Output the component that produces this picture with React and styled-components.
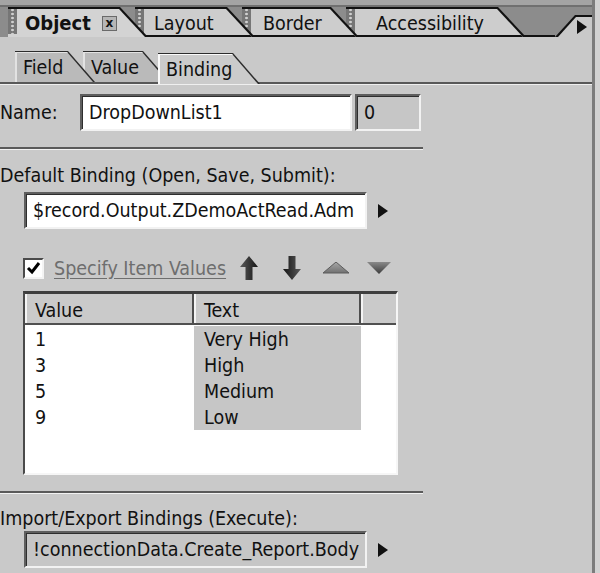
import React from 'react'
import styled, { createGlobalStyle } from 'styled-components'

const GlobalStyle = createGlobalStyle`
  html, body {
    margin: 0;
    padding: 0;
    background: #c9c9c9;
  }
  body {
    font-family: "DejaVu Sans Condensed", "DejaVu Sans", sans-serif;
    font-size: 19.5px;
    color: #111;
  }
`

const rows = [
  { value: '1', text: 'Very High' },
  { value: '3', text: 'High' },
  { value: '5', text: 'Medium' },
  { value: '9', text: 'Low' },
]

function UpArrow({ down }) {
  const id = down ? 'ga2' : 'ga1'
  return (
    <svg width="18" height="24" viewBox="0 0 18 24" style={down ? { transform: 'rotate(180deg)' } : null}>
      <defs>
        <linearGradient id={id} x1="0" x2="1" y1="0" y2="0">
          <stop offset="0" stopColor="#5a5a5a" />
          <stop offset="1" stopColor="#141414" />
        </linearGradient>
      </defs>
      <path d="M9 0 L18 11 L12.5 11 L12.5 24 L5.5 24 L5.5 11 L0 11 Z" fill={`url(#${id})`} />
    </svg>
  )
}

function TriUp() {
  return (
    <svg width="26" height="12" viewBox="0 0 26 12">
      <defs>
        <linearGradient id="gtu" x1="0" x2="0" y1="0" y2="1">
          <stop offset="0" stopColor="#a8a8a8" />
          <stop offset="1" stopColor="#707070" />
        </linearGradient>
      </defs>
      <polygon points="0,11 13,0 26,11" fill="url(#gtu)" stroke="#5c5c5c" strokeWidth="1" />
    </svg>
  )
}

function TriDown() {
  return (
    <svg width="24" height="14" viewBox="0 0 24 14">
      <defs>
        <linearGradient id="gtd" x1="0" x2="0" y1="0" y2="1">
          <stop offset="0" stopColor="#8a8a8a" />
          <stop offset="1" stopColor="#3c3c3c" />
        </linearGradient>
      </defs>
      <polygon points="0,1 24,1 12,13" fill="url(#gtd)" />
    </svg>
  )
}

function App() {
  return (
    <>
      <GlobalStyle />
      <Frame>
        <Panel>
          <TabStrip>
            <Tab $w={140} $z={5} $first>
              <TabFace $active>
                <Grip />
                <TabLabel $active>Object</TabLabel>
                <CloseBox>x</CloseBox>
              </TabFace>
            </Tab>
            <Tab $w={120} $z={4}>
              <TabFace>
                <Grip />
                <TabLabel $pad={10}>Layout</TabLabel>
              </TabFace>
            </Tab>
            <Tab $w={117} $z={3}>
              <TabFace>
                <Grip />
                <TabLabel $pad={12}>Border</TabLabel>
              </TabFace>
            </Tab>
            <Tab $w={180} $z={2}>
              <TabFace>
                <Grip />
                <TabLabel $pad={21}>Accessibility</TabLabel>
              </TabFace>
            </Tab>
            <StripFill />
            <Cap>
              <RightArrow $small />
            </Cap>
          </TabStrip>

          <SubTabRow>
            <SubTab $w={80} $z={3} $first>
              <SubFace>Field</SubFace>
            </SubTab>
            <SubTab $w={87} $z={2}>
              <SubFace>Value</SubFace>
            </SubTab>
            <SubTab $w={102} $z={4} $active>
              <SubFace $active>Binding</SubFace>
            </SubTab>
          </SubTabRow>

          <Content>
            <NameRow>
              <NameLabel>Name:</NameLabel>
              <Field $w={272}>DropDownList1</Field>
              <Field $w={66} $ml={3} $gray>0</Field>
            </NameRow>

            <Separator $mt={16} />

            <Label $mt={16}>Default Binding (Open, Save, Submit):</Label>
            <BindRow $mt={5}>
              <Field $w={343}>$record.Output.ZDemoActRead.Adm</Field>
              <RightArrow />
            </BindRow>

            <CheckRow>
              <CheckBox>
                <svg width="15" height="15" viewBox="0 0 15 15">
                  <path d="M2 7 L6 11 L13 2" fill="none" stroke="#000" strokeWidth="3" />
                </svg>
              </CheckBox>
              <CheckLabel>Specify Item Values</CheckLabel>
              <IconSlot $ml={14}><UpArrow /></IconSlot>
              <IconSlot $ml={25}><UpArrow down /></IconSlot>
              <IconSlot $ml={22}><TriUp /></IconSlot>
              <IconSlot $ml={18}><TriDown /></IconSlot>
            </CheckRow>

            <Table>
              <HeadRow>
                <HeadCell>Value</HeadCell>
                <HeadCell>Text</HeadCell>
                <HeadCell />
              </HeadRow>
              <Body>
                {rows.map(r => (
                  <BodyRow key={r.value}>
                    <ValueCell>{r.value}</ValueCell>
                    <TextCell>{r.text}</TextCell>
                    <span />
                  </BodyRow>
                ))}
              </Body>
            </Table>

            <Separator $mt={16} />

            <Label $mt={15}>Import/Export Bindings (Execute):</Label>
            <BindRow $mt={1}>
              <Field $w={343} $gray>!connectionData.Create_Report.Body</Field>
              <RightArrow />
            </BindRow>
          </Content>
        </Panel>
        <RightEdge />
      </Frame>
    </>
  )
}

const Frame = styled.div`
  display: flex;
  width: 600px;
  height: 573px;
  overflow: hidden;
`

const Panel = styled.div`
  width: 592px;
  display: flex;
  flex-direction: column;
  background: #c9c9c9;
`

const RightEdge = styled.div`
  width: 8px;
  box-sizing: border-box;
  border-left: 3px solid #7c7c7c;
  background: #d2d2d2;
`

const TabStrip = styled.div`
  display: flex;
  align-items: flex-end;
  box-sizing: border-box;
  height: 37px;
  padding-left: 8px;
  background: linear-gradient(#a4a4a4 0 5px, #707070 5px 7px, #8c8c8c 7px);
`

const Tab = styled.div`
  position: relative;
  z-index: ${p => p.$z};
  flex-shrink: 0;
  box-sizing: border-box;
  width: ${p => p.$w}px;
  height: 30px;
  margin-left: ${p => (p.$first ? 0 : -13)}px;
  padding-top: 2px;
  background: #111;
  clip-path: polygon(0 0, calc(100% - 28px) 0, 100% 100%, 0 100%);
`

const TabFace = styled.div`
  display: flex;
  align-items: center;
  height: 100%;
  background: ${p => (p.$active ? '#d3d3d3' : '#cdcdcd')};
  clip-path: polygon(0 0, calc(100% - 29px) 0, calc(100% - 3px) 100%, 0 100%);
  box-shadow: ${p => (p.$active ? 'none' : 'inset 0 -2px 0 #111')};
`

const Grip = styled.span`
  align-self: stretch;
  width: 9px;
  margin-bottom: 3px;
  background: radial-gradient(circle, #d0d0d0 1px, transparent 1.6px) center 3px / 9px 4px repeat-y, #767676;
`

const TabLabel = styled.span`
  margin-left: ${p => p.$pad || 8}px;
  font-size: ${p => (p.$active ? 20 : 19.5)}px;
  font-weight: ${p => (p.$active ? 700 : 400)};
  color: #111;
  white-space: nowrap;
`

const CloseBox = styled.span`
  display: flex;
  align-items: center;
  justify-content: center;
  width: 13px;
  height: 13px;
  margin-left: 11px;
  border: 1px solid #6a6a6a;
  background: #b6b6b6;
  font-family: "DejaVu Sans", sans-serif;
  font-size: 12px;
  font-weight: 700;
  line-height: 1;
`

const StripFill = styled.div`
  flex: 1;
  height: 30px;
  margin-left: -28px;
  box-sizing: border-box;
  border-bottom: 2px solid #111;
`

const Cap = styled.div`
  position: relative;
  display: flex;
  align-items: flex-end;
  justify-content: flex-end;
  box-sizing: border-box;
  width: 37px;
  height: 30px;
  padding: 0 5px 3px 0;
  background: #111;
  clip-path: polygon(0 100%, 20px 8px, 100% 8px, 100% 100%);

  &::before {
    content: '';
    position: absolute;
    inset: 0;
    background: #c9c9c9;
    clip-path: polygon(3px 100%, 21px 10px, 100% 10px, 100% 100%);
  }
`

const RightArrow = styled.span`
  position: relative;
  width: 0;
  height: 0;
  margin-left: ${p => (p.$small ? 0 : 11)}px;
  border-left: 10px solid #111;
  border-top: 7px solid transparent;
  border-bottom: 7px solid transparent;
`

const SubTabRow = styled.div`
  display: flex;
  align-items: flex-end;
  box-sizing: border-box;
  height: 47px;
  padding-left: 15px;
  border-bottom: 2px solid #585858;
  box-shadow: 0 1px 0 #efefef;
`

const SubTab = styled.div`
  position: relative;
  z-index: ${p => p.$z};
  flex-shrink: 0;
  box-sizing: border-box;
  width: ${p => p.$w}px;
  height: 31px;
  margin-left: ${p => (p.$first ? 0 : -12)}px;
  margin-bottom: ${p => (p.$active ? -2 : 0)}px;
  padding-top: 1px;
  background: #2c2c2c;
  clip-path: polygon(0 0, calc(100% - 27px) 0, 100% 100%, 0 100%);
`

const SubFace = styled.div`
  display: flex;
  align-items: center;
  box-sizing: border-box;
  height: 100%;
  padding-left: 8px;
  background: ${p => (p.$active ? '#cbcbcb' : '#bababa')};
  box-shadow: inset 2px 1px 0 ${p => (p.$active ? '#fafafa' : '#e2e2e2')};
  clip-path: polygon(0 0, calc(100% - 28px) 0, calc(100% - 2px) 100%, 0 100%);
`

const Content = styled.div`
  display: flex;
  flex-direction: column;
  align-items: flex-start;
`

const NameRow = styled.div`
  display: flex;
  align-items: center;
  margin-top: 10px;
`

const NameLabel = styled.span`
  width: 80px;
  white-space: nowrap;
`

const Label = styled.div`
  margin-top: ${p => p.$mt || 0}px;
  line-height: 22px;
  white-space: nowrap;
`

const Field = styled.div`
  display: flex;
  align-items: center;
  box-sizing: border-box;
  width: ${p => p.$w}px;
  height: 37px;
  margin-left: ${p => p.$ml || 0}px;
  padding-left: 7px;
  overflow: hidden;
  white-space: nowrap;
  border: 2px solid;
  border-color: #5e5e5e #f2f2f2 #f2f2f2 #5e5e5e;
  box-shadow: inset 1px 1px 0 #2e2e2e;
  background: ${p => (p.$gray ? '#c6c6c6' : '#fff')};
`

const Separator = styled.div`
  width: 423px;
  height: 2px;
  margin-top: ${p => p.$mt}px;
  background: #5a5a5a;
  box-shadow: 0 1px 0 #f2f2f2;
`

const BindRow = styled.div`
  display: flex;
  align-items: center;
  margin-top: ${p => p.$mt}px;
  margin-left: 24px;
`

const CheckRow = styled.div`
  display: flex;
  align-items: center;
  height: 24px;
  margin-top: 27px;
  margin-left: 23px;
`

const CheckBox = styled.span`
  display: flex;
  align-items: center;
  justify-content: center;
  box-sizing: border-box;
  width: 21px;
  height: 21px;
  border: 2px solid;
  border-color: #4a4a4a #f4f4f4 #f4f4f4 #4a4a4a;
  background: #fff;
`

const CheckLabel = styled.span`
  margin-left: 10px;
  color: #6e6e6e;
  text-decoration: underline;
  text-underline-offset: 3px;
  white-space: nowrap;
`

const IconSlot = styled.span`
  display: flex;
  align-items: center;
  margin-left: ${p => p.$ml}px;
`

const Table = styled.div`
  box-sizing: border-box;
  width: 375px;
  height: 184px;
  margin-top: 11px;
  margin-left: 23px;
  border-style: solid;
  border-width: 3px 2px 2px 2px;
  border-color: #3e3e3e #f6f6f6 #f6f6f6 #4a4a4a;
  background: #fff;
  overflow: hidden;
`

const HeadRow = styled.div`
  display: grid;
  grid-template-columns: 169px 167px 1fr;
  height: 29px;
  border-bottom: 2px solid #505050;
`

const HeadCell = styled.div`
  display: flex;
  align-items: center;
  padding: 3px 0 0 10px;
  background: #cacaca;
  border-right: 2px solid #4e4e4e;
  box-shadow: inset 2px 0 0 #f4f4f4;

  &:last-child {
    border-right: none;
  }
`

const Body = styled.div`
  padding-top: 1px;
`

const BodyRow = styled.div`
  display: grid;
  grid-template-columns: 169px 167px 1fr;
  height: 26px;
`

const ValueCell = styled.div`
  display: flex;
  align-items: center;
  padding-left: 10px;
`

const TextCell = styled.div`
  display: flex;
  align-items: center;
  padding-left: 10px;
  background: #c6c6c6;
`

export default App
